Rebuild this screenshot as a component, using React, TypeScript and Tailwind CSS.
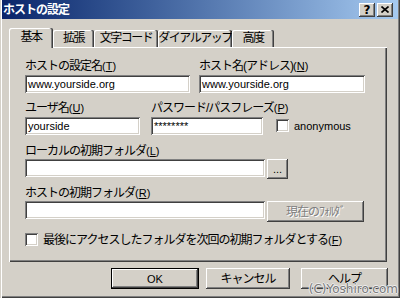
import type { ReactNode } from 'react';

const raised = 'shadow-[inset_-1px_-1px_0_#404040,inset_1px_1px_0_#ffffff,inset_-2px_-2px_0_#808080]';
const sunken = 'shadow-[inset_1px_1px_0_#808080,inset_-1px_-1px_0_#ffffff,inset_2px_2px_0_#404040,inset_-2px_-2px_0_#d4d0c8]';

function Label({ children }: { children: ReactNode }) {
  return <div className="h-[12px] leading-[12px] text-[12px] tracking-[-1px] whitespace-nowrap">{children}</div>;
}

function Key({ k }: { k: string }) {
  return <span className="tracking-normal text-[11px]">(<span className="underline">{k}</span>)</span>;
}

function Input({ w, value, mt }: { w: string; value?: string; mt: string }) {
  return (
    <div className={`${w} ${mt} h-[18px] bg-white ${sunken} pl-[3px] text-[11px] leading-[18px]`}>
      {value}
    </div>
  );
}

function CheckBox() {
  return <div className={`w-[13px] h-[13px] bg-white ${sunken} shrink-0`} />;
}

function Tab({ label, w, active }: { label: string; w: string; active?: boolean }) {
  return (
    <div
      className={`${w} ${active ? 'h-[20px] -mb-px pt-[3px] z-10' : 'h-[17px] pt-[2px]'} bg-[#d4d0c8] rounded-t-[2px] text-center whitespace-nowrap text-[12px] leading-[12px] tracking-[-1.5px] shadow-[inset_-1px_0_0_#404040,inset_-2px_0_0_#808080,inset_1px_1px_0_#ffffff]`}
    >
      {label}
    </div>
  );
}

function TitleButton({ children }: { children: ReactNode }) {
  return (
    <div className={`w-[16px] h-[14px] bg-[#d4d0c8] ${raised} flex items-center justify-center`}>
      {children}
    </div>
  );
}

export default function App() {
  return (
    <div className="relative w-[400px] h-[298px] overflow-hidden bg-[#d4d0c8] text-black font-['Liberation_Sans','Noto_Sans_CJK_JP',sans-serif] shadow-[inset_1px_0_0_#d4d0c8,inset_2px_0_0_#ffffff,inset_-1px_-1px_0_#404040,inset_-2px_-2px_0_#808080]">
      {/* title bar */}
      <div className="mx-[2px] h-[19px] bg-gradient-to-r from-[#0a246a] to-[#a6caf0] flex items-center pl-[1px] pr-[5px]">
        <span className="text-white font-bold text-[12px] tracking-[-1px] leading-[12px]">ホストの設定</span>
        <div className="ml-auto flex gap-[2px]">
          <TitleButton>
            <span className="font-bold text-[12px] leading-[12px] font-['DejaVu_Sans',sans-serif]">?</span>
          </TitleButton>
          <TitleButton>
            <svg width="8" height="7" viewBox="0 0 8 7">
              <path d="M0.5 0.5 L7.5 6.5 M7.5 0.5 L0.5 6.5" stroke="black" strokeWidth="1.6" />
            </svg>
          </TitleButton>
        </div>
      </div>

      <div className="pl-[9px]">
        {/* tabs */}
        <div className="mt-[9px] h-[19px] flex items-end relative">
          <Tab label="基本" w="w-[44px]" active />
          <Tab label="拡張" w="w-[41px]" />
          <Tab label="文字コード" w="w-[64px]" />
          <Tab label="ダイアルアップ" w="w-[74px]" />
          <Tab label="高度" w="w-[42px]" />
        </div>

        {/* panel */}
        <div className="w-[378px] h-[215px] shadow-[inset_1px_1px_0_#ffffff,inset_-1px_-1px_0_#404040,inset_-2px_-2px_0_#808080] pl-[16px] pt-[13px] flex flex-col">
          <div className="flex gap-[9px]">
            <div className="w-[165px]">
              <Label>ホストの設定名<Key k="T" /></Label>
              <Input w="w-[165px]" mt="mt-[3px]" value="www.yourside.org" />
            </div>
            <div className="w-[166px]">
              <Label>ホスト名(アドレス)<Key k="N" /></Label>
              <Input w="w-[166px]" mt="mt-[3px]" value="www.yourside.org" />
            </div>
          </div>

          <div className="flex mt-[9px]">
            <div className="w-[115px]">
              <Label>ユーザ名<Key k="U" /></Label>
              <Input w="w-[115px]" mt="mt-[3px]" value="yourside" />
            </div>
            <div className="w-[112px] ml-[11px]">
              <Label>パスワード/パスフレーズ<Key k="P" /></Label>
              <Input w="w-[112px]" mt="mt-[3px]" value="********" />
            </div>
            <div className="ml-[13px] mt-[17px] flex items-center h-[13px]">
              <CheckBox />
              <span className="ml-[5px] text-[11px] leading-[12px]">anonymous</span>
            </div>
          </div>

          <div className="mt-[10px]">
            <Label>ローカルの初期フォルダ<Key k="L" /></Label>
            <div className="flex mt-[2px] items-start">
              <Input w="w-[240px]" mt="mt-0" />
              <div className={`ml-[2px] w-[21px] h-[20px] ${raised} flex items-center justify-center text-[11px] leading-[11px]`}>...</div>
            </div>
          </div>

          <div className="mt-[8px]">
            <Label>ホストの初期フォルダ<Key k="R" /></Label>
            <div className="flex mt-[2px] items-start">
              <Input w="w-[240px]" mt="mt-0" />
              <div className={`ml-[2px] w-[97px] h-[21px] ${raised} flex items-center justify-center text-[12px] leading-[12px] tracking-[-1px] text-[#808080] [text-shadow:1px_1px_0_#ffffff]`}>
                現在のﾌｫﾙﾀﾞ
              </div>
            </div>
          </div>

          <div className="mt-[11px] flex items-center">
            <CheckBox />
            <span className="ml-[5px] text-[12px] leading-[12px] tracking-[-1px]">
              最後にアクセスしたフォルダを次回の初期フォルダとする<Key k="F" />
            </span>
          </div>
        </div>

        {/* buttons */}
        <div className="flex mt-[6px] text-[12px] leading-[12px]">
          <div className="ml-[102px] w-[88px] h-[21px] border border-black">
            <div className={`w-full h-full ${raised} flex items-center justify-center text-[11px]`}>OK</div>
          </div>
          <div className={`ml-[7px] w-[84px] h-[21px] ${raised} flex items-center justify-center tracking-[-1px]`}>キャンセル</div>
          <div className={`ml-[11px] w-[87px] h-[21px] ${raised} flex items-center justify-center tracking-[-1px]`}>ヘルプ</div>
        </div>
      </div>

      {/* watermark */}
      <div className="absolute right-[2px] bottom-[1px] text-[12px] leading-[15px] text-[#7a7a7a] font-['DejaVu_Sans',sans-serif] [text-shadow:1px_0_0_#ececec,-1px_0_0_#ececec,0_1px_0_#ececec,0_-1px_0_#ececec]">
        (C)Yoshiro.com
      </div>
    </div>
  );
}
